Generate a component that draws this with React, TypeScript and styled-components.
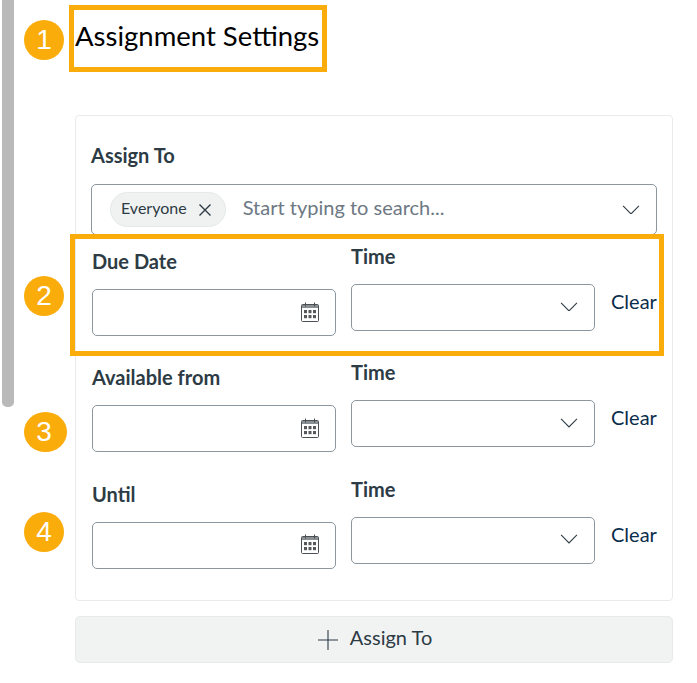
import { FC } from 'react'
import styled, { createGlobalStyle } from 'styled-components'

const GlobalStyle = createGlobalStyle`
  html, body {
    margin: 0;
    padding: 0;
    background: #ffffff;
    font-family: Lato, "Liberation Sans", sans-serif;
    color: #2d3b45;
  }
`

const StyledPage = styled.div`
  position: relative;
  width: 697px;
  height: 683px;
  overflow: hidden;
  box-sizing: border-box;
  padding: 17px 24px 0 75px;
`

const Scrollbar = styled.div`
  position: absolute;
  left: 2px;
  top: 0;
  width: 12px;
  height: 407px;
  background: #b9b9b9;
  border-radius: 0 0 5px 5px;
`

const Badge = styled.div<{ $top: number; $wide?: boolean }>`
  position: absolute;
  left: 24px;
  top: ${({ $top }) => $top}px;
  width: ${({ $wide }) => ($wide ? 43 : 40)}px;
  height: 40px;
  box-sizing: border-box;
  padding-right: ${({ $wide }) => ($wide ? 3 : 0)}px;
  border-radius: 50%;
  background: #f9ac0a;
  color: #ffffff;
  font-family: "Liberation Sans", Arial, sans-serif;
  font-size: 28px;
  display: flex;
  align-items: center;
  justify-content: center;
`

const Highlight = styled.div<{ $left: number; $top: number; $width: number; $height: number }>`
  position: absolute;
  left: ${({ $left }) => $left}px;
  top: ${({ $top }) => $top}px;
  width: ${({ $width }) => $width}px;
  height: ${({ $height }) => $height}px;
  box-sizing: border-box;
  border: 5px solid #f9ac0a;
`

const Title = styled.h1`
  margin: 0 0 61px;
  font-size: 27.5px;
  line-height: 37px;
  font-weight: 400;
  color: #000000;
`

const Card = styled.div`
  box-sizing: border-box;
  width: 598px;
  height: 486px;
  border: 1px solid #e8eaec;
  border-radius: 4px;
  padding: 28px 15px 0;
`

const Label = styled.div`
  font-size: 20px;
  line-height: 22px;
  padding-top: 1px;
  font-weight: 700;
  color: #2d3b45;
`

const AssignLabel = styled(Label)`
  padding-top: 0;
  margin-bottom: 18px;
`

const SearchBox = styled.div`
  box-sizing: border-box;
  width: 566px;
  height: 51px;
  border: 1px solid #8b969e;
  border-radius: 5px;
  display: flex;
  align-items: center;
  padding: 0 16px 0 18px;
  margin-bottom: 9px;
`

const Tag = styled.div`
  display: flex;
  align-items: center;
  gap: 11px;
  height: 35px;
  box-sizing: border-box;
  padding: 0 13px 4px 10px;
  border-radius: 18px;
  background: #f0f2f2;
  border: 1px solid #e6e9e9;
  font-size: 16px;
  margin-right: 17px;
`

const TagClose = styled.span`
  display: flex;
  margin-top: 4px;
`

const Placeholder = styled.div`
  flex: 1;
  font-size: 20px;
  color: #6d7883;
  padding: 0 0 5px 0;
`

const Rows = styled.div`
  display: flex;
  flex-direction: column;
  gap: 24.4px;
`

const Row = styled.div`
  display: grid;
  grid-template-columns: 244px 244px auto;
  column-gap: 15px;
  padding-left: 1px;
`

const Field = styled.div<{ $offset?: number }>`
  display: flex;
  flex-direction: column;
  gap: 17px;
  margin-top: ${({ $offset }) => $offset ?? 0}px;
`

const Control = styled.div`
  box-sizing: border-box;
  height: 47px;
  border: 1px solid #8b969e;
  border-radius: 5px;
  display: flex;
  align-items: center;
  justify-content: flex-end;
  padding: 0 16px 2px 0;
`

const ClearLink = styled.div`
  font-size: 20px;
  line-height: 24px;
  color: #0a2d4a;
  margin-top: 45px;
  padding-left: 1px;
  white-space: nowrap;
`

const AddButton = styled.div`
  box-sizing: border-box;
  width: 598px;
  height: 47px;
  margin-top: 15px;
  background: #f1f3f3;
  border: 1px solid #e8eaea;
  border-radius: 5px;
  display: flex;
  align-items: center;
  justify-content: center;
  gap: 12px;
  padding-bottom: 6px;
  font-size: 20px;
  color: #2d3b45;
`

const ButtonIcon = styled.span`
  display: flex;
  margin: 6px 0 0 2px;
`

const Chevron: FC<{ size: number }> = ({ size }) => (
  <svg width={size} height={size * 0.55} viewBox="0 0 18 10" fill="none">
    <path d="M1 1l8 8 8-8" stroke="#2d3b45" strokeWidth="1.1" />
  </svg>
)

const CloseIcon: FC = () => (
  <svg width="14" height="14" viewBox="0 0 14 14" fill="none">
    <path d="M1.5 1.5l11 11M12.5 1.5l-11 11" stroke="#2d3b45" strokeWidth="1.4" />
  </svg>
)

const PlusIcon: FC = () => (
  <svg width="20" height="20" viewBox="0 0 20 20" fill="none">
    <path d="M10 0v20M0 10h20" stroke="#2d3b45" strokeWidth="1.1" />
  </svg>
)

const CalendarIcon: FC = () => (
  <svg width="18" height="20" viewBox="0 0 18 20" fill="none">
    <rect x="0.5" y="2.5" width="17" height="17" rx="1" fill="#ffffff" stroke="#4a4f54" />
    <rect x="1" y="3" width="16" height="3" fill="#8a8f94" />
    <path d="M4.5 0.5v4M13.5 0.5v4" stroke="#4a4f54" />
    {[8, 13].map((y) =>
      [3, 7.5, 12].map((x) => (
        <rect key={`${x}-${y}`} x={x} y={y} width="3" height="3.2" fill="#55595d" />
      ))
    )}
  </svg>
)

const rows = [
  { label: 'Due Date' },
  { label: 'Available from' },
  { label: 'Until' }
]

export default function App() {
  return (
    <StyledPage>
      <GlobalStyle />
      <Title>Assignment Settings</Title>
      <Card>
        <AssignLabel>Assign To</AssignLabel>
        <SearchBox>
          <Tag>
            Everyone
            <TagClose>
              <CloseIcon />
            </TagClose>
          </Tag>
          <Placeholder>Start typing to search...</Placeholder>
          <Chevron size={18} />
        </SearchBox>
        <Rows>
          {rows.map((row) => (
            <Row key={row.label}>
              <Field $offset={5}>
                <Label>{row.label}</Label>
                <Control>
                  <CalendarIcon />
                </Control>
              </Field>
              <Field>
                <Label>Time</Label>
                <Control>
                  <Chevron size={18} />
                </Control>
              </Field>
              <ClearLink>Clear</ClearLink>
            </Row>
          ))}
        </Rows>
      </Card>
      <AddButton>
        <ButtonIcon>
          <PlusIcon />
        </ButtonIcon>
        Assign To
      </AddButton>

      <Scrollbar />
      <Highlight $left={69} $top={5} $width={258} $height={67} />
      <Highlight $left={70} $top={234} $width={594} $height={122} />
      <Badge $top={20}>1</Badge>
      <Badge $top={276}>2</Badge>
      <Badge $top={412} $wide>3</Badge>
      <Badge $top={512}>4</Badge>
    </StyledPage>
  )
}
